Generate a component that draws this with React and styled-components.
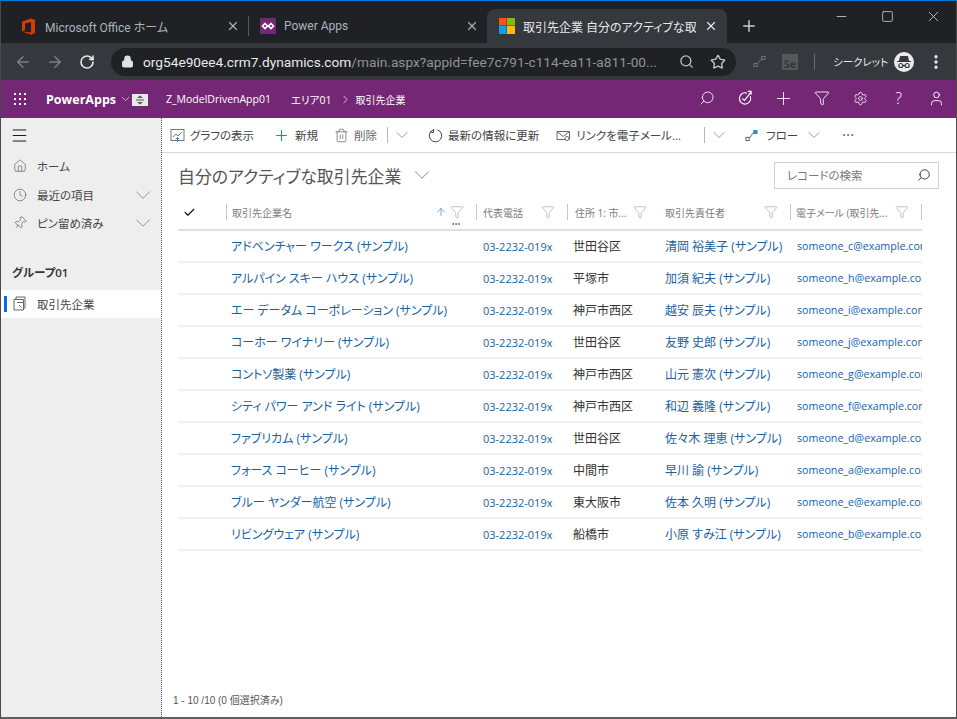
import React from "react";
import styled, { createGlobalStyle } from "styled-components";
import {
  ArrowLeft,
  ArrowRight,
  RotateCw,
  Lock,
  Search,
  Star,
  X,
  Plus,
  Minus,
  Square,
  MoreVertical,
  ChevronDown,
  ChevronRight,
  Filter,
  Settings,
  User,
  Menu,
  Home,
  Clock,
  Pin,
  Trash2,
  Check,
  ArrowUp,
  MoreHorizontal,
} from "lucide-react";

const FONT = `"Open Sans", "Noto Sans CJK JP", sans-serif`;
const COLUMNS = "48px 250px 91px 92px 131px 132px";

const GlobalStyle = createGlobalStyle`
  html, body { margin: 0; padding: 0; background: #fff; }
  body { font-family: ${FONT}; font-feature-settings: "palt"; }
  * { box-sizing: border-box; }
`;

// ---------- BROWSER ----------
const Window = styled.div`
  width: 957px;
  height: 719px;
  display: flex;
  flex-direction: column;
  overflow: hidden;
  border-top: 1px solid #0078d7;
  border-left: 1px solid #4a4a4a;
  border-right: 1px solid #4a4a4a;
  border-bottom: 2px solid #5f5f5f;
  background: #fff;
`;
const TabStrip = styled.div`
  height: 42px;
  flex: none;
  background: #202124;
  display: flex;
  align-items: flex-end;
  padding-left: 7px;
`;
const Tab = styled.div`
  width: ${(p) => p.$w}px;
  height: 34px;
  display: flex;
  align-items: center;
  gap: 8px;
  padding: 0 ${(p) => p.$pr}px 0 ${(p) => p.$pl}px;
  color: ${(p) => (p.$active ? "#e8eaed" : "#a9b4bf")};
  background: ${(p) => (p.$active ? "#35383c" : "transparent")};
  border-radius: 8px 8px 0 0;
  font-family: Roboto, "Noto Sans CJK JP", sans-serif;
  font-size: 12px;
  white-space: nowrap;
`;
const TabTitle = styled.span`
  flex: 1;
  overflow: hidden;
`;
const TabSep = styled.div`
  width: 1px;
  height: 20px;
  margin: 0 0 7px 2px;
  background: #55585c;
`;
const NewTab = styled.div`
  margin: 0 0 8px 13px;
  color: #c8cacc;
  display: flex;
`;
const WindowControls = styled.div`
  margin-left: auto;
  align-self: flex-start;
  display: flex;
  color: #f0f0f0;
`;
const WinBtn = styled.div`
  width: 46px;
  height: 30px;
  display: flex;
  align-items: center;
  justify-content: center;
`;
const Toolbar = styled.div`
  height: 37px;
  flex: none;
  background: #35383c;
  display: flex;
  align-items: center;
  padding-left: 6px;
`;
const NavBtn = styled.div`
  width: 32px;
  display: flex;
  justify-content: center;
  color: ${(p) => (p.$on ? "#e8eaed" : "#7c7f83")};
`;
const Omnibox = styled.div`
  width: 625px;
  height: 28px;
  margin-left: 8px;
  padding: 0 2px 0 10px;
  border-radius: 14px;
  background: #202124;
  display: flex;
  align-items: center;
  color: #dfe1e5;
`;
const Url = styled.div`
  flex: 1;
  margin-left: 9px;
  font-family: Roboto, sans-serif;
  font-size: 13.7px;
  white-space: nowrap;
  overflow: hidden;
  color: #8f9499;
  & b {
    font-weight: 400;
    color: #e8eaed;
  }
`;
const OmniIcon = styled.div`
  width: 32px;
  flex: none;
  display: flex;
  justify-content: center;
  margin-left: ${(p) => p.$ml || 0}px;
  color: #c4c7ca;
`;
const SeBadge = styled.div`
  width: 16px;
  height: 16px;
  margin-left: 7px;
  background: #55585b;
  color: #35383c;
  font-size: 11px;
  font-weight: 700;
  line-height: 20px;
  text-align: center;
  overflow: hidden;
`;
const ToolSep = styled.div`
  width: 1px;
  height: 16px;
  margin: 0 18px 0 16px;
  background: #6b6e72;
`;
const Incognito = styled.div`
  color: #e8eaed;
  font-size: 10.5px;
  white-space: nowrap;
  width: 59px;
`;
const IncognitoBadge = styled.div`
  width: 20px;
  height: 20px;
  margin-left: 2px;
  border-radius: 50%;
  background: #e8eaed;
  display: flex;
  align-items: center;
  justify-content: center;
`;
const Dots = styled.div`
  margin-left: 13px;
  display: flex;
  color: #e8eaed;
`;

// ---------- APP BAR ----------
const AppBar = styled.div`
  height: 38px;
  flex: none;
  background: #742774;
  color: #fff;
  display: flex;
  align-items: center;
  padding-left: 13px;
`;
const Waffle = styled.div`
  width: 13px;
  display: grid;
  grid-template-columns: repeat(3, 2px);
  gap: 3px;
  margin-right: 19px;
  & i {
    width: 2px;
    height: 2px;
    background: #fff;
  }
`;
const Brand = styled.div`
  font-size: 12.5px;
  font-weight: 700;
  width: 71px;
`;
const BrandChevron = styled.span`
  display: flex;
  width: 13px;
  margin-left: 2px;
`;
const Scroller = styled.div`
  width: 16px;
  height: 12px;
  margin: 2px 18px 0 0;
  background: #e8e8e8;
  display: flex;
  align-items: center;
  justify-content: center;
`;
const Crumb = styled.div`
  font-size: ${(p) => p.$fs || 10.5}px;
  margin-right: ${(p) => p.$mr || 0}px;
  margin-left: ${(p) => p.$ml || 0}px;
  white-space: nowrap;
`;
const AppIcons = styled.div`
  margin: -2px 0 0 auto;
  display: flex;
`;
const AppIcon = styled.div`
  width: 38.3px;
  height: 20px;
  display: flex;
  align-items: center;
  justify-content: center;
  font-size: 16px;
  font-weight: 300;
`;

// ---------- BODY ----------
const Body = styled.div`
  flex: 1;
  min-height: 0;
  display: flex;
`;
const Sidebar = styled.nav`
  width: 161px;
  flex: none;
  background: #eeeeee;
  border-right: 1px dotted #555;
  display: flex;
  flex-direction: column;
  color: #333;
  font-size: 11.5px;
`;
const Burger = styled.div`
  height: 34px;
  padding-left: 9px;
  display: flex;
  align-items: center;
`;
const NavItem = styled.div`
  height: 28.5px;
  display: flex;
  align-items: center;
  padding-left: 12px;
  gap: 10px;
  color: #444;
  position: relative;
  background: ${(p) => (p.$active ? "#fff" : "transparent")};
  &::before {
    content: "";
    display: ${(p) => (p.$active ? "block" : "none")};
    position: absolute;
    left: 3px;
    top: 6px;
    width: 3px;
    height: 16px;
    background: #0f62fe;
  }
`;
const NavLabel = styled.span`
  flex: 1;
`;
const NavChevron = styled.span`
  display: flex;
  margin-right: 5px;
  color: #8a8a8a;
`;
const GroupLabel = styled.div`
  margin: 26px 0 10px 11px;
  font-size: 11.5px;
  font-weight: 600;
  color: #333;
`;
const Main = styled.main`
  flex: 1;
  min-width: 0;
  display: flex;
  flex-direction: column;
`;
const CommandBar = styled.div`
  height: 35px;
  flex: none;
  border-bottom: 1px solid #d8d8d8;
  display: flex;
  align-items: center;
  padding-left: 8px;
  font-size: 11.5px;
  color: #444;
`;
const Command = styled.div`
  display: flex;
  align-items: center;
  gap: ${(p) => p.$gap || 5}px;
  white-space: nowrap;
  margin-left: ${(p) => p.$ml || 0}px;
  color: ${(p) => (p.$muted ? "#666" : "#444")};
`;
const CommandSep = styled.div`
  width: 1px;
  height: 16px;
  background: #b5b5b5;
  margin-left: ${(p) => p.$ml || 0}px;
`;
const ViewHead = styled.div`
  height: 44px;
  flex: none;
  display: flex;
  align-items: center;
  padding: 0 17px 0 16px;
`;
const ViewTitle = styled.h1`
  margin: 0;
  font-size: 16.9px;
  font-weight: 400;
  color: #555;
`;
const ViewChevron = styled.span`
  display: flex;
  margin-left: 8px;
  color: #777;
`;
const SearchBox = styled.div`
  margin-left: auto;
  width: 165px;
  height: 27px;
  border: 1px solid #d2d2d2;
  display: flex;
  align-items: center;
  justify-content: space-between;
  padding: 0 7px 0 12px;
  font-size: 11.5px;
  color: #777;
`;
const Grid = styled.div`
  margin-left: 16px;
  width: 744px;
  overflow: hidden;
`;
const HeaderRow = styled.div`
  display: grid;
  grid-template-columns: ${COLUMNS};
  align-items: start;
  height: 34px;
  border-bottom: 2px solid #e0e0e0;
`;
const CheckCell = styled.div`
  display: flex;
  align-items: center;
  height: 16px;
  margin-top: 7px;
  padding-left: 5px;
  color: #111;
`;
const HeadCell = styled.div`
  position: relative;
  display: flex;
  align-items: center;
  justify-content: space-between;
  height: 16px;
  margin-top: 7px;
  padding: 0 12px 0 ${(p) => p.$pl || 5}px;
  font-size: 10px;
  color: #7b7b7b;
  white-space: nowrap;
  border-left: ${(p) => (p.$noSep ? "none" : "1px solid #c8c8c8")};
  border-right: ${(p) => (p.$last ? "1px solid #c8c8c8" : "none")};
`;
const HeadIcons = styled.span`
  display: flex;
  align-items: center;
  gap: 3px;
`;
const SortArrow = styled.span`
  display: flex;
  color: #3f8ac4;
`;
const FilterIcon = styled.span`
  display: flex;
  color: ${(p) => p.$c};
`;
const Ellipsis = styled.span`
  position: absolute;
  right: 15px;
  bottom: -9px;
  display: flex;
  color: #444;
`;
const Row = styled.div`
  display: grid;
  grid-template-columns: ${COLUMNS};
  height: 32px;
  align-items: center;
  border-bottom: 2px solid #f1f1f1;
  white-space: nowrap;
`;
const LinkCell = styled.div`
  color: #1a5f9e;
  padding-left: ${(p) => p.$pl}px;
  font-size: ${(p) => p.$fs}px;
  overflow: hidden;
`;
const TextCell = styled.div`
  color: #333;
  padding-left: 6px;
  font-size: 12px;
`;
const Footer = styled.div`
  margin-top: auto;
  padding: 0 0 10px 11px;
  font-family: "Liberation Sans", "Noto Sans CJK JP", sans-serif;
  font-size: 10px;
  color: #555;
`;

// ---------- LOGOS ----------
const OfficeLogo = () => (
  <svg width="16" height="17" viewBox="0 0 16 17">
    <path d="M1 3.500 10 .5 14 2v13l-4 1.800L1 13.500l9 1V4L4 5.500v6.500L1 13.500z" fill="#d83b01" />
  </svg>
);
const PowerAppsLogo = () => (
  <svg width="16" height="16" viewBox="0 0 16 16">
    <rect width="16" height="16" fill="#742774" />
    <path d="M5 5.500 7.500 8 5 10.500 2.500 8zM11 5.500 13.500 8 11 10.500 8.500 8z" fill="none" stroke="#fff" strokeWidth="1.600" />
  </svg>
);
const WindowsLogo = () => (
  <svg width="16" height="16" viewBox="0 0 16 16">
    <rect width="7.500" height="7.500" fill="#f35325" />
    <rect x="8" width="8" height="7.500" fill="#81bc06" />
    <rect y="8" width="7.500" height="8" fill="#05a6f0" />
    <rect x="8" y="8" width="8" height="8" fill="#ffba08" />
  </svg>
);
const FlowIcon = ({ c, s }) => (
  <svg width="13" height="13" viewBox="0 0 14 14" fill="none">
    <rect x="1" y="9" width="3.500" height="3.500" stroke={s} />
    <rect x="9.500" y="1.500" width="3.500" height="3.500" fill={c} stroke={c === "none" ? s : c} />
    <path d="M4.500 9.500C7 9 6.500 5 9.500 4" stroke={s} />
  </svg>
);
const IncognitoIcon = () => (
  <svg width="16" height="14" viewBox="0 0 16 14" fill="none">
    <path d="M1 6.500h14M3.500 6 4.600 1.500h6.800L12.500 6z" stroke="#35383c" fill="#35383c" strokeWidth="1.200" />
    <circle cx="4.800" cy="10.500" r="2" stroke="#35383c" strokeWidth="1.200" />
    <circle cx="11.200" cy="10.500" r="2" stroke="#35383c" strokeWidth="1.200" />
    <path d="M6.800 10.500h2.400" stroke="#35383c" strokeWidth="1.200" />
  </svg>
);
const CompassIcon = () => (
  <svg width="16" height="16" viewBox="0 0 17 17" fill="none" stroke="#fff" strokeWidth="1.200">
    <path d="M14 6.500a6 6 0 1 1-3.500-3.200" />
    <path d="M5.500 9 8 11l7-9M11.500 1.500h3.500V5" />
  </svg>
);
const ChartIcon = () => (
  <svg width="15" height="15" viewBox="0 0 15 15" fill="none">
    <rect x="1" y="1.500" width="13" height="11" stroke="#777" />
    <path d="M3 9l3-3 2 2 4-4" stroke="#3aa655" />
    <path d="M7.500 14V9.500M5.800 11.200l1.700-1.700 1.700 1.700" stroke="#2b88d8" />
  </svg>
);
const RefreshIcon = () => (
  <svg width="15" height="15" viewBox="0 0 15 15" fill="none" stroke="#444">
    <path d="M5.500 1.800A6.200 6.200 0 1 0 9.500 1.800" />
    <path d="M5.500 1v3.500H2" transform="rotate(8 5 3)" />
  </svg>
);
const MailLinkIcon = () => (
  <svg width="15" height="13" viewBox="0 0 15 13" fill="none" stroke="#666">
    <path d="M1 2.500h12.500v8H1zM1 2.500l6.200 5 6.300-5" />
    <circle cx="11" cy="9.500" r="2" fill="#fff" />
  </svg>
);
const EntityIcon = () => (
  <svg width="14" height="15" viewBox="0 0 14 15" fill="none" stroke="#666">
    <path d="M3 3V1h9v11h-1.500" />
    <path d="M1 3.500h9.500v10.500H1z" />
    <path d="M4 6.500h6.500" />
    <path d="M6 9l2.500 2.500" />
  </svg>
);

// ---------- DATA ----------
const accounts = [
  ["アドベンチャー ワークス (サンプル)", "世田谷区", "清岡 裕美子 (サンプル)", "someone_c@example.com"],
  ["アルパイン スキー ハウス (サンプル)", "平塚市", "加須 紀夫 (サンプル)", "someone_h@example.com"],
  ["エー データム コーポレーション (サンプル)", "神戸市西区", "越安 辰夫 (サンプル)", "someone_i@example.com"],
  ["コーホー ワイナリー (サンプル)", "世田谷区", "友野 史郎 (サンプル)", "someone_j@example.com"],
  ["コントソ製薬 (サンプル)", "神戸市西区", "山元 憲次 (サンプル)", "someone_g@example.com"],
  ["シティ パワー アンド ライト (サンプル)", "神戸市西区", "和辺 義隆 (サンプル)", "someone_f@example.com"],
  ["ファブリカム (サンプル)", "世田谷区", "佐々木 理恵 (サンプル)", "someone_d@example.com"],
  ["フォース コーヒー (サンプル)", "中間市", "早川 諭 (サンプル)", "someone_a@example.com"],
  ["ブルー ヤンダー航空 (サンプル)", "東大阪市", "佐本 久明 (サンプル)", "someone_e@example.com"],
  ["リビングウェア (サンプル)", "船橋市", "小原 すみ江 (サンプル)", "someone_b@example.com"],
];

const HeadFilter = ({ c = "#8f9aa5" }) => (
  <FilterIcon $c={c}>
    <Filter size={14} strokeWidth={1} />
  </FilterIcon>
);

// ---------- MAIN COMPONENT ----------
const App = () => (
  <>
    <GlobalStyle />
    <Window>
      <TabStrip>
        <Tab $w={238} $pl={13} $pr={6}>
          <OfficeLogo />
          <TabTitle>Microsoft Office ホーム</TabTitle>
          <X size={14} />
        </Tab>
        <TabSep />
        <Tab $w={238} $pl={11} $pr={8}>
          <PowerAppsLogo />
          <TabTitle>Power Apps</TabTitle>
          <X size={14} />
        </Tab>
        <Tab $w={240} $pl={12} $pr={9} $active>
          <WindowsLogo />
          <TabTitle>取引先企業 自分のアクティブな取引先企業</TabTitle>
          <X size={14} color="#e8eaed" />
        </Tab>
        <NewTab>
          <Plus size={18} />
        </NewTab>
        <WindowControls>
          <WinBtn>
            <Minus size={15} strokeWidth={1.1} />
          </WinBtn>
          <WinBtn>
            <Square size={13} strokeWidth={1.2} />
          </WinBtn>
          <WinBtn>
            <X size={17} strokeWidth={1} />
          </WinBtn>
        </WindowControls>
      </TabStrip>

      <Toolbar>
        <NavBtn>
          <ArrowLeft size={18} />
        </NavBtn>
        <NavBtn>
          <ArrowRight size={18} />
        </NavBtn>
        <NavBtn $on>
          <RotateCw size={16} strokeWidth={2.4} />
        </NavBtn>
        <Omnibox>
          <Lock size={13} fill="#dfe1e5" />
          <Url>
            <b>org54e90ee4.crm7.dynamics.com</b>/main.aspx?appid=fee7c791-c114-ea11-a811-00...
          </Url>
          <OmniIcon>
            <Search size={15} />
          </OmniIcon>
          <OmniIcon>
            <Star size={16} />
          </OmniIcon>
        </Omnibox>
        <OmniIcon $ml={7}>
          <FlowIcon c="none" s="#77797c" />
        </OmniIcon>
        <SeBadge>Se</SeBadge>
        <ToolSep />
        <Incognito>シークレット</Incognito>
        <IncognitoBadge>
          <IncognitoIcon />
        </IncognitoBadge>
        <Dots>
          <MoreVertical size={18} strokeWidth={2.4} />
        </Dots>
      </Toolbar>

      <AppBar>
        <Waffle>
          {Array.from({ length: 9 }).map((_, i) => (
            <i key={i} />
          ))}
        </Waffle>
        <Brand>PowerApps</Brand>
        <BrandChevron>
          <ChevronDown size={16} strokeWidth={1.2} />
        </BrandChevron>
        <Scroller>
          <svg width="10" height="10" viewBox="0 0 10 10">
            <path d="M5 .5 8 3H2zM5 9.500 8 7H2z" fill="#555" />
            <path d="M1 5h8" stroke="#555" />
          </svg>
        </Scroller>
        <Crumb $mr={20}>Z_ModelDrivenApp01</Crumb>
        <Crumb $mr={8}>エリア01</Crumb>
        <ChevronRight size={13} strokeWidth={1.3} />
        <Crumb $ml={3} $fs={10}>取引先企業</Crumb>
        <AppIcons>
          <AppIcon>
            <Search size={16} strokeWidth={1.3} style={{ transform: "scaleX(-1)" }} />
          </AppIcon>
          <AppIcon>
            <CompassIcon />
          </AppIcon>
          <AppIcon>
            <Plus size={21} strokeWidth={1} />
          </AppIcon>
          <AppIcon>
            <Filter size={16} strokeWidth={1.3} />
          </AppIcon>
          <AppIcon>
            <Settings size={15} strokeWidth={1.3} />
          </AppIcon>
          <AppIcon>?</AppIcon>
          <AppIcon>
            <User size={17} strokeWidth={1.3} />
          </AppIcon>
        </AppIcons>
      </AppBar>

      <Body>
        <Sidebar>
          <Burger>
            <Menu size={19} strokeWidth={1.2} color="#111" />
          </Burger>
          <NavItem>
            <Home size={14} strokeWidth={1.1} color="#555" />
            <NavLabel>ホーム</NavLabel>
          </NavItem>
          <NavItem>
            <Clock size={14} strokeWidth={1.1} color="#555" />
            <NavLabel>最近の項目</NavLabel>
            <NavChevron>
              <ChevronDown size={26} strokeWidth={0.8} />
            </NavChevron>
          </NavItem>
          <NavItem>
            <Pin size={14} strokeWidth={1.1} color="#555" style={{ transform: "rotate(40deg)" }} />
            <NavLabel>ピン留め済み</NavLabel>
            <NavChevron>
              <ChevronDown size={26} strokeWidth={0.8} />
            </NavChevron>
          </NavItem>
          <GroupLabel>グループ01</GroupLabel>
          <NavItem $active>
            <EntityIcon />
            <NavLabel>取引先企業</NavLabel>
          </NavItem>
        </Sidebar>

        <Main>
          <CommandBar>
            <Command>
              <ChartIcon />
              グラフの表示
            </Command>
            <Command $ml={19}>
              <Plus size={17} strokeWidth={1.6} color="#16a34a" />
              新規
            </Command>
            <Command $ml={16} $muted>
              <Trash2 size={15} strokeWidth={1.2} />
              削除
            </Command>
            <CommandSep $ml={10} />
            <Command $ml={4}>
              <ChevronDown size={20} strokeWidth={0.9} color="#777" />
            </Command>
            <Command $ml={16}>
              <RefreshIcon />
              最新の情報に更新
            </Command>
            <Command $ml={17}>
              <MailLinkIcon />
              リンクを電子メール...
            </Command>
            <CommandSep $ml={23} />
            <Command $ml={4}>
              <ChevronDown size={20} strokeWidth={0.9} color="#777" />
            </Command>
            <Command $ml={16} $gap={8}>
              <FlowIcon c="#2b88d8" s="#555" />
              フロー
            </Command>
            <Command $ml={6}>
              <ChevronDown size={20} strokeWidth={0.9} color="#777" />
            </Command>
            <Command $ml={17}>
              <MoreHorizontal size={14} strokeWidth={1.2} />
            </Command>
          </CommandBar>

          <ViewHead>
            <ViewTitle>自分のアクティブな取引先企業</ViewTitle>
            <ViewChevron>
              <ChevronDown size={26} strokeWidth={0.8} />
            </ViewChevron>
            <SearchBox>
              レコードの検索
              <Search size={14} strokeWidth={1.6} color="#333" style={{ transform: "scaleX(-1)" }} />
            </SearchBox>
          </ViewHead>

          <Grid>
            <HeaderRow>
              <CheckCell>
                <Check size={13} strokeWidth={2.2} />
              </CheckCell>
              <HeadCell>
                取引先企業名
                <HeadIcons>
                  <SortArrow>
                    <ArrowUp size={12} strokeWidth={1.4} />
                  </SortArrow>
                  <HeadFilter />
                </HeadIcons>
                <Ellipsis>
                  <MoreHorizontal size={10} strokeWidth={2} />
                </Ellipsis>
              </HeadCell>
              <HeadCell $pl={6}>
                代表電話
                <HeadFilter />
              </HeadCell>
              <HeadCell $pl={7}>
                住所 1: 市...
                <HeadFilter />
              </HeadCell>
              <HeadCell $noSep $pl={6}>
                取引先責任者
                <HeadFilter />
              </HeadCell>
              <HeadCell $last>
                電子メール (取引先...
                <HeadFilter />
              </HeadCell>
            </HeaderRow>
            {accounts.map(([name, city, owner, mail]) => (
              <Row key={mail}>
                <span />
                <LinkCell $pl={5} $fs={12}>{name}</LinkCell>
                <LinkCell $pl={7} $fs={11}>03-2232-019x</LinkCell>
                <TextCell>{city}</TextCell>
                <LinkCell $pl={6} $fs={12}>{owner}</LinkCell>
                <LinkCell $pl={7} $fs={10.7}>{mail}</LinkCell>
              </Row>
            ))}
          </Grid>
          <Footer>1 - 10 /10 (0 個選択済み)</Footer>
        </Main>
      </Body>
    </Window>
  </>
);

export default App;
